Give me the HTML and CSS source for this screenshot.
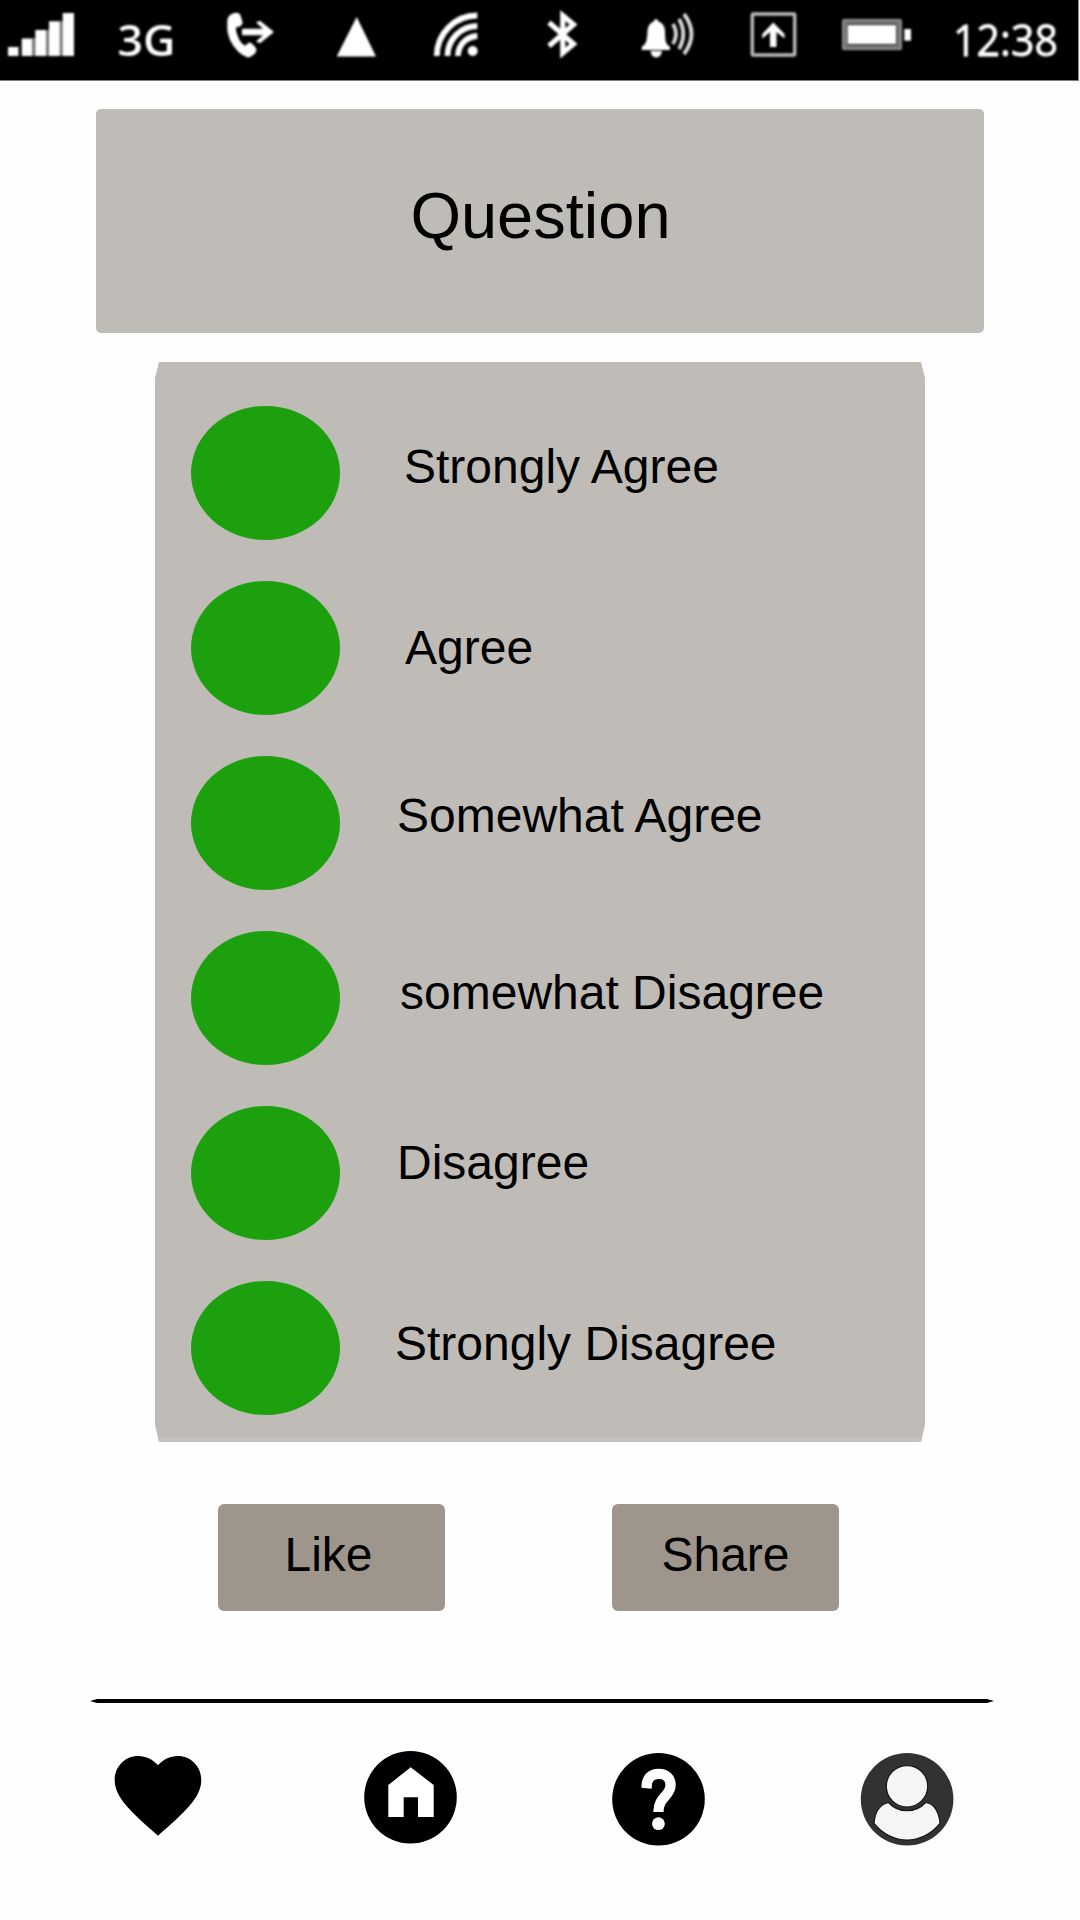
FILE: index.html
```html
<!DOCTYPE html>
<html lang="en">
<head>
<meta charset="utf-8">
<title>Question</title>
<link rel="stylesheet" href="styles.css">
</head>
<body>
<header class="status">
  <svg viewBox="0 0 100 80"><path fill="#777" d="M32 38h3.5v18H32zM46 30h3v26h-3zM59 21h4v35h-4z"/><path d="M8 47h10.5v9H8zM21.7 38.5H32V56H21.7zM35.3 30H46v26H35.3zM49 21.3h10.7V56H49zM62.7 13H74v43H62.7z"/></svg>
  <svg viewBox="0 0 100 80"><text class="status-text network" x="17.5" y="56" textLength="58" lengthAdjust="spacingAndGlyphs">3G</text></svg>
  <svg viewBox="0 0 110 80"><path d="M30 15Q33 12.7 36.7 12.7Q40 13 40.7 16L42.7 22.7Q42 26 39.3 26.7L36 27.3Q35.5 30 37.3 35Q39 40 41.7 43.3L45 45.7L49.3 42.3Q52 43 55 46.7Q57 49 56 51.7Q54.5 55 51.7 56Q49 58 47.3 57.3Q43 56 38.3 51.7Q33 46.5 30 40Q27.3 33 27.3 28.3V20Q28 16.5 30 15z"/><path d="M42 28.8H63L56 22.5L60 20.8L74 32L60 43.2L56 41.5L63 35.2H42z"/></svg>
  <svg viewBox="0 0 90 80"><path d="M46.7 17L66 56.5H26.7z"/></svg>
  <svg viewBox="0 0 110 80"><circle cx="72.7" cy="51" r="5"/><path class="line wide" d="M36.8 56A40.5 40.5 0 0 1 77.3 15.5M47.5 56A30 30 0 0 1 77.3 26M58 56A20 20 0 0 1 77.3 36"/></svg>
  <svg viewBox="0 0 100 80"><path class="line" d="M39 22.5L63.5 44L52.8 53V15.5L63.5 24.5L39 46"/></svg>
  <svg viewBox="0 0 110 80"><path d="M46 19Q48 19 48.5 21.5Q54.5 23.5 55 31C55.3 41 55 43 60 47V50H31.7V47C37 43 36.7 41 37.5 31Q38 23.5 43.8 21.5Q44 19 46 19zM40.5 51H52Q51 57.5 46.2 57.5Q41.5 57.5 40.5 51z"/><path class="line thin" d="M63 24Q69 34 63 44M69 19Q77.5 34 69 49M74 14Q89 34 74 54"/></svg>
  <svg viewBox="0 0 100 80"><rect class="frame" x="32.3" y="14" width="42.4" height="41" rx="1"/><path d="M53.3 22.5L64.5 34V38.5L56.5 32V47H50V32L42.3 38.5V34z"/></svg>
  <svg viewBox="0 0 110 80"><rect class="cell" x="25" y="21.7" width="54" height="25.6"/><rect class="cell-edge" x="22.8" y="19.5" width="58.4" height="30" rx="2"/><path d="M27.7 25H76v19H27.7zM84.3 29H91v11.7h-6.7z"/></svg>
  <svg viewBox="0 0 148 80"><text class="status-text" x="23" y="56" textLength="105" lengthAdjust="spacingAndGlyphs">12:38</text></svg>
</header>

<main class="survey">
  <h1 class="question">Question</h1>
  <ul class="answers">
    <li class="answer strongly-agree"><span class="choice"></span><span class="label">Strongly Agree</span></li>
    <li class="answer agree"><span class="choice"></span><span class="label">Agree</span></li>
    <li class="answer somewhat-agree"><span class="choice"></span><span class="label">Somewhat Agree</span></li>
    <li class="answer somewhat-disagree"><span class="choice"></span><span class="label">somewhat Disagree</span></li>
    <li class="answer disagree"><span class="choice"></span><span class="label">Disagree</span></li>
    <li class="answer strongly-disagree"><span class="choice"></span><span class="label">Strongly Disagree</span></li>
  </ul>
  <div class="actions">
    <button class="action like">Like</button>
    <button class="action share">Share</button>
  </div>
</main>

<div class="divider"></div>
<nav class="tabs">
  <svg class="heart" viewBox="0 0 88 82"><path d="M44 10.3C39 4.5 32 1 24.3 1C11 1 .7 11.5 .7 25C.7 42.5 17 57 44 80.7C71 57 87.3 42.5 87.3 25C87.3 11.5 77 1 63.7 1C56 1 49 4.5 44 10.3z"/></svg>
  <svg class="home" viewBox="0 0 94 94"><circle cx="46.5" cy="47.2" r="46.3" fill="#000003"/><path fill="#fff" d="M46.7 17.3L69.7 35V67H54V47.3H39.7V67H24.3V35z"/></svg>
  <svg class="help" viewBox="0 0 94 94"><circle cx="46.5" cy="46.3" r="46.3"/><path fill="none" stroke="#fff" stroke-width="10.3" d="M34.5 35.2L34.7 33C34.7 25.5 39 20.9 46.6 20.9C54 20.9 58.6 25 58.6 32C58.6 43 46.5 43.5 46.4 59"/><circle cx="46.4" cy="70.7" r="6.4" fill="#fff"/></svg>
  <svg class="profile" viewBox="0 0 94 94"><circle cx="47.1" cy="46.3" r="46.3" fill="#323232"/><g fill="#f5f5f5" stroke="#151515" stroke-width="1.2"><circle cx="47" cy="33.3" r="20.7"/><path d="M14 70.3C14.8 60 19.5 51.5 28.5 49.5C38.5 60.5 55.5 60.5 65.7 49.5C75 50.5 79.3 61 80 70.3C71.5 81 59 87 47 87C35 87 22.5 81 14 70.3z"/></g></svg>
</nav>
</body>
</html>
```

FILE: styles.css
```css
* {
  box-sizing: border-box;
}

body {
  margin: 0;
  width: 1080px;
  height: 1920px;
  background: #fefefe;
  color: #000;
  font-family: "Liberation Sans", Arial, sans-serif;
}

svg {
  display: block;
}

.status {
  display: grid;
  grid-template-columns: 100px 100px 110px 90px 110px 100px 110px 100px 110px 148px;
  width: 1079px;
  height: 81px;
  background: #000;
  border-right: 1px solid #888;
  border-bottom: 1px solid #777;
}

.status svg {
  width: 100%;
  height: 80px;
  fill: #fff;
  filter: blur(0.8px);
}

.status .line {
  fill: none;
  stroke: #fff;
  stroke-width: 5.2;
}

.status .wide {
  stroke-width: 5.8;
}

.status .thin {
  stroke-width: 3.8;
  stroke: #ddd;
}

.status .frame {
  fill: none;
  stroke: #bbb;
  stroke-width: 3.4;
}

.status .cell {
  fill: none;
  stroke: #777;
  stroke-width: 5;
}

.status .cell-edge {
  fill: none;
  stroke: #aaa;
  stroke-width: 1.2;
}

.status-text {
  fill: #fff;
  font-family: "Open Sans", "Noto Sans", sans-serif;
  font-size: 44px;
  font-weight: 500;
  stroke: #fff;
  stroke-width: 0.8px;
}

.network {
  font-size: 43px;
  font-weight: 600;
  stroke-width: 0;
}

.survey {
  display: flex;
  flex-direction: column;
  align-items: center;
  padding-top: 28px;
}

.question {
  width: 888px;
  height: 224px;
  margin: 0;
  padding: 69px 0 0 1px;
  border-radius: 5px;
  background: #bfbcb7;
  font-size: 65px;
  font-weight: 400;
  line-height: 76px;
  text-align: center;
}

.answers {
  display: flex;
  flex-direction: column;
  gap: 41px;
  width: 770px;
  height: 1080px;
  margin: 29px 0 0;
  padding: 44px 36px 23px;
  list-style: none;
  background: #bfbcb7;
  border-bottom: 4px solid #c7c2bf;
  clip-path: polygon(4px 0, 766px 0, 770px 16px, 770px 1063px, 766px 1080px, 4px 1080px, 0 1063px, 0 16px);
}

.answer {
  display: flex;
  align-items: flex-start;
  height: 134px;
}

.choice {
  width: 149px;
  height: 134px;
  border-radius: 50%;
  background: #1ca00e;
}

.label {
  font-size: 48px;
  line-height: 56px;
  white-space: nowrap;
}

.strongly-agree .label { margin: 33px 0 0 64px; }
.agree .label { margin: 39px 0 0 65px; }
.somewhat-agree .label { margin: 32px 0 0 57px; }
.somewhat-disagree .label { margin: 34px 0 0 60px; }
.disagree .label { margin: 29px 0 0 57px; }
.strongly-disagree .label { margin: 35px 0 0 55px; }

.actions {
  display: flex;
  gap: 167px;
  width: 621px;
  margin: 62px 23px 0 0;
}

.action {
  width: 227px;
  height: 107px;
  padding: 0 0 6px;
  border: 0;
  border-radius: 6px;
  background: #9e968c;
  color: #000;
  font: 48px/56px "Liberation Sans", Arial, sans-serif;
}

.like {
  padding-right: 6px;
}

.divider {
  width: 904px;
  height: 4px;
  margin: 88px 0 0 90px;
  background: #000;
  clip-path: polygon(0 50%, 7px 0, 897px 0, 100% 50%, 897px 100%, 7px 100%);
}

.tabs {
  display: flex;
  align-items: flex-start;
  padding: 47px 0 0 114px;
}

.heart {
  width: 88px;
  height: 82px;
  margin-top: 5px;
}

.home,
.help,
.profile {
  width: 94px;
  height: 94px;
}

.home {
  margin-left: 162px;
}

.help {
  margin: 3px 0 0 154px;
}

.profile {
  margin: 3px 0 0 154px;
}
```
